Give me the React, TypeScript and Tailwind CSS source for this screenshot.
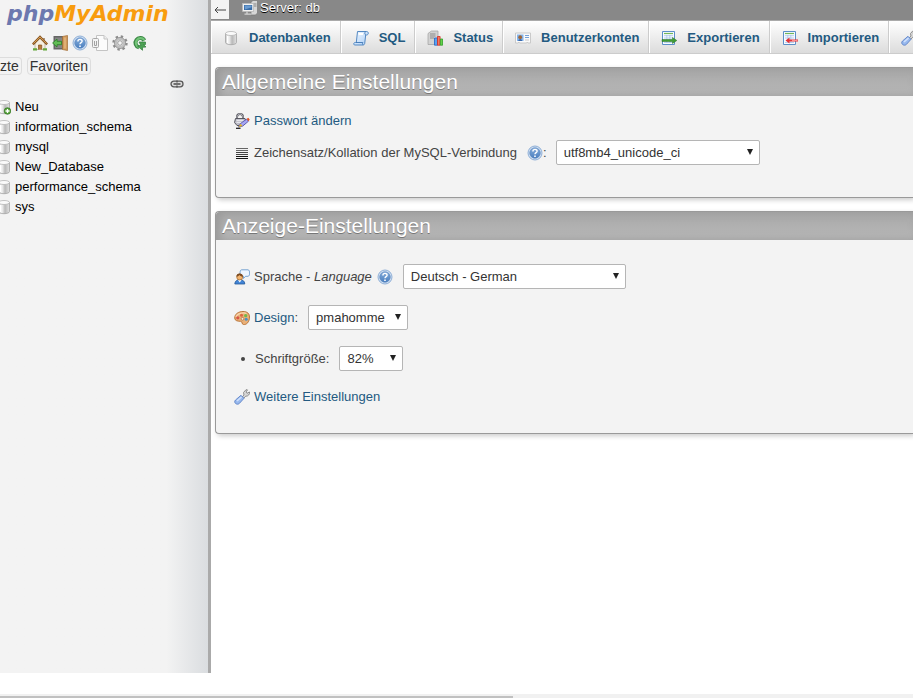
import { useState } from 'react';
import type { ReactNode } from 'react';

type IconProps = { children: ReactNode; className?: string; viewBox?: string };

function Icon({ children, className = 'size-4', viewBox = '0 0 16 16' }: IconProps) {
  return (
    <svg viewBox={viewBox} className={`block shrink-0 ${className}`} fill="none" aria-hidden="true">
      {children}
    </svg>
  );
}

function Cylinder() {
  return (
    <>
      <path d="M2.500 3.500v9c0 1.300 2.500 2.200 5.500 2.200s5.500-.9 5.500-2.200v-9z" fill="url(#metal)" stroke="#a3a3a3" strokeWidth=".8" />
      <ellipse cx="8" cy="3.500" rx="5.500" ry="2" fill="#fafafa" stroke="#b5b5b5" strokeWidth=".8" />
      <path d="M4.500 6v7" stroke="#fff" strokeWidth="1" />
    </>
  );
}

function Defs() {
  return (
    <svg className="absolute size-0" aria-hidden="true">
      <defs>
        <linearGradient id="metal" x1="0" x2="1" y1="0" y2="0">
          <stop offset="0" stopColor="#cfcfcf" />
          <stop offset=".3" stopColor="#f4f4f4" />
          <stop offset=".6" stopColor="#b9b9b9" />
          <stop offset="1" stopColor="#e2e2e2" />
        </linearGradient>
        <linearGradient id="ball" x1="0" x2="0" y1="0" y2="1">
          <stop offset="0" stopColor="#86addb" />
          <stop offset="1" stopColor="#4a7fbf" />
        </linearGradient>
        <linearGradient id="paper" x1="0" x2="1" y1="0" y2="1">
          <stop offset="0" stopColor="#f3f9ff" />
          <stop offset="1" stopColor="#a9cdf6" />
        </linearGradient>
      </defs>
    </svg>
  );
}

const DatabaseIcon = () => <Icon><Cylinder /></Icon>;

const HomeIcon = () => (
  <Icon>
    <path d="M3 8v6.500h10V8L8 3.500z" fill="#f6efe2" stroke="#aaa08e" strokeWidth=".7" />
    <path d="M.8 9.300 8 2l7.200 7.300" stroke="#8a5722" strokeWidth="2.400" />
    <path d="M1.500 8.500 8 2l6.500 6.500" stroke="#d49b51" strokeWidth="1" />
    <path d="M6.500 14.500V10h3.200v4.500" fill="#b97936" stroke="#81501f" strokeWidth=".7" />
    <path d="M1 14.300h4M11 14.300h4" stroke="#65a83b" strokeWidth="2.200" />
    <path d="M12 3v2.500" stroke="#8d653d" strokeWidth="1.300" />
  </Icon>
);

const ExitIcon = () => (
  <Icon>
    <path d="M1.500 1H11v13.500H1.500z" fill="#666" />
    <path d="M3 2.500h7V13H3z" fill="#858585" />
    <path d="m10.500 1.500 5-1v15l-5-1z" fill="#d19a5c" stroke="#a06c35" strokeWidth=".7" />
    <path d="M13 2.500v11" stroke="#e3b67c" strokeWidth="1.600" />
    <path d="M.6 8 5 4v2.300h4.500v3.400H5V12z" fill="#62bd55" stroke="#2a7d25" strokeWidth=".8" />
  </Icon>
);

const HelpIcon = () => (
  <Icon>
    <circle cx="8" cy="8" r="7" fill="#d3e2f4" stroke="#86a8d2" strokeWidth=".9" />
    <circle cx="8" cy="8" r="5.300" fill="url(#ball)" stroke="#5a87be" strokeWidth=".6" />
    <path d="M5.900 6.400c0-2.700 4.300-2.600 4.200-.2C10 7.700 8 7.500 8 9.300" stroke="#fff" strokeWidth="1.400" />
    <path d="M7.200 10.500h1.600v1.400H7.200z" fill="#fff" />
  </Icon>
);

const DocsIcon = () => (
  <Icon>
    <path d="M4.500.5h7.500l3.500 3.500v11.500h-11z" fill="#fcfcfc" stroke="#c4c4c4" />
    <path d="M12 .5V4h3.500" fill="#eee" stroke="#c4c4c4" />
    <rect x=".5" y="3.500" width="6" height="9" rx="1" fill="#f3f3f3" stroke="#a8a8a8" />
    <path d="M2.500 6v4.500h2V6" stroke="#a2a2a2" />
  </Icon>
);

const GearIcon = () => (
  <Icon>
    <circle cx="8" cy="8" r="6.500" stroke="#8c8c8c" strokeWidth="2.400" strokeDasharray="2.350 2.750" />
    <circle cx="8" cy="8" r="4.200" fill="#eee" stroke="#c0c0c0" strokeWidth="2.600" />
    <circle cx="8" cy="8" r="5.600" stroke="#8f8f8f" strokeWidth=".8" />
    <circle cx="8" cy="8" r="2.300" fill="#f4f4f4" stroke="#8a8a8a" strokeWidth=".8" />
  </Icon>
);

const ReloadIcon = () => (
  <Icon>
    <path d="M12.300 5.500A4.700 4.700 0 1 0 7 12.300" stroke="#3a8744" strokeWidth="4" />
    <path d="M12.300 5A4.700 4.700 0 1 0 7 12.300" stroke="#72c377" strokeWidth="2.200" />
    <path d="M7 7h6.500v2.500h-2L14 12l-3.500.3v3L5.500 11l3.500-.5z" fill="#4da255" stroke="#2f7b3a" strokeWidth=".7" />
  </Icon>
);

const ServerIcon = () => (
  <Icon>
    <path d="m9 2 2-1.500h4.500V13l-2 2H9z" fill="#d6d6d6" stroke="#777" strokeWidth=".7" />
    <path d="M10.500 4h4M10.500 6h4" stroke="#858585" />
    <rect x=".6" y="3.500" width="11" height="8" fill="#f1f1f1" stroke="#bababa" strokeWidth=".8" />
    <path d="M2 5h8.200v5H2z" fill="#396ca6" />
    <path d="M2.600 5.500h7v1.800L3 9.500z" fill="#6a9bd0" />
    <path d="M5 11.500v2M2.500 14.200h7" stroke="#d2d2d2" strokeWidth="1.300" />
  </Icon>
);

const ScrollIcon = () => (
  <Icon>
    <path d="M4.500 1.500h9c2.500 0 2.300 3.500 0 3.500h-.8l-1 8.500c-.2 1.500-1.700 1.500-1.700 1.500H2c-2 0-1.600-2.500.3-2.500h1z" fill="url(#paper)" stroke="#5489c3" strokeWidth="1" />
    <path d="M12.800 1.600c-1.300.7-1.300 3 0 3.300M3 12.500h6.800c-.7 1 0 2 .4 2.400" stroke="#3e76b4" strokeWidth=".9" />
    <path d="M5.500 4h4.500" stroke="#fff" strokeWidth="2" />
  </Icon>
);

const StatusIcon = () => (
  <Icon>
    <path d="M1 3.500 4.500 1H11v11l-2 2.500H1z" fill="#d2d2d2" stroke="#a0a0a0" strokeWidth=".7" />
    <path d="M3 4h5.500M3 6h5.500M3 8h4" stroke="#8b8b8b" />
    <path d="M7.500 8h3v7.200h-3z" fill="#58a2f2" stroke="#2565c4" strokeWidth=".8" />
    <path d="M10.500 6.500h2.600v8.700h-2.600z" fill="#f77462" stroke="#d62e20" strokeWidth=".8" />
    <path d="M13.300 9h2.300v6.200h-2.300z" fill="#62d54b" stroke="#2c9b25" strokeWidth=".8" />
  </Icon>
);

const UserCardIcon = () => (
  <Icon>
    <path d="M.5 3h15v10H13l-.7-1-.8 1H4.700l-.8-1-.8 1H.5z" fill="#fafafa" stroke="#c5c5c5" strokeWidth=".9" />
    <path d="M2 4.500h6.500V11H2z" fill="#83b4ed" />
    <circle cx="5.200" cy="7.200" r="1.900" fill="#9e6537" />
    <path d="M3.200 11c.3-2.800 3.800-2.800 4 0z" fill="#3b69aa" />
    <path d="M10 5.500h4M10 7.500h4" stroke="#74a1d9" />
    <path d="M10 10h4" stroke="#c8c8c8" />
  </Icon>
);

function SheetIcon({ kind }: { kind: 'export' | 'import' }) {
  return (
    <Icon>
      <path d="M1.500 1.500h12v13h-12z" fill="#f7fbff" stroke="#5c8fc8" />
      <path d="M3 3.500h9" stroke="#72b85b" strokeWidth="1.200" />
      <path d="M3 5.700h9M3 8h9M3 12.500h9M5.800 5v8M8.800 5v8" stroke="#a9c5e8" strokeWidth=".8" />
      {kind === 'export' ? (
        <path d="M1 9.500h10.500V7.500l4.300 3-4.300 3v-2H1z" fill="#3f9d35" stroke="#256e20" strokeWidth=".5" />
      ) : (
        <>
          <path d="M3.500 10.500 7.500 7.500v2H16v2H7.500v2z" fill="#e33338" />
          <path d="M10 10.500h5.500" stroke="#ff9a9a" strokeWidth=".9" />
        </>
      )}
    </Icon>
  );
}

const WrenchIcon = () => (
  <Icon>
    <path d="M8 8.200 10 6 9.500 3.500 12 .7l1.500.2L12 3l1 1.300L15.500 3c.7 2-1.500 4.500-3.800 4.200L9.500 9.500z" fill="#d7d7d7" stroke="#858585" strokeWidth=".9" />
    <path d="M1.500 11 7 6.300l3 3L5.500 14.300c-2.400 2.500-6.500-.8-4-3.300z" fill="#98b9ee" stroke="#5d82c6" strokeWidth=".9" />
    <path d="m3 12 4.500-4" stroke="#d0e1fd" strokeWidth="1.600" />
  </Icon>
);

const PasswordIcon = () => (
  <Icon>
    <path d="M3 6V4c0-4 6-4 6 0v2" stroke="#55555d" strokeWidth="2" />
    <path d="M3 6V4c0-4 6-4 6 0v2" stroke="#e2e2e8" strokeWidth=".7" />
    <path d="M1.500 5.500h9.500l1 3-1.500 3-3 1H3L.5 9.500z" fill="#bcbcc6" stroke="#4c4c55" strokeWidth=".9" />
    <path d="M2.500 7.300h7M2.500 9.300h6.500" stroke="#f1f1f5" />
    <path d="m4.500 14 2-3.500 6-4.300 2 2-6 5z" fill="#a6a5f2" stroke="#4c4ba5" strokeWidth=".8" />
    <path d="m4.500 14 2-3.300 2 2.200z" fill="#e4b622" />
    <path d="m12.700 6 1.500-1.200 1.500 1.800-1.200 1.700z" fill="#e34b1d" />
    <path d="M2 15.300h4.500" stroke="#111" strokeWidth="1.200" />
  </Icon>
);

const LinesIcon = () => (
  <Icon>
    <path d="M2 3.500h12M2 5.500h12" stroke="#666" />
    <path d="M2 7.500h12M2 9.500h12" stroke="#444" />
    <path d="M2 11.500h12M2 13.500h12" stroke="#151515" />
  </Icon>
);

const LanguageIcon = () => (
  <Icon>
    <path d="M7.500.8H14c2.200 0 2.200 6.500 0 6.500h-2.500L9.500 9.500V7.300h-2c-2 0-2-6.500 0-6.500z" fill="#eef6ff" stroke="#6b9bcc" strokeWidth=".9" />
    <path d="M.8 15c0-6 10-6 10 0z" fill="#4184d6" stroke="#265c9b" strokeWidth=".8" />
    <path d="m4 11 1.800 2.500L7.500 11z" fill="#fff" />
    <circle cx="5.700" cy="8" r="3" fill="#f2b46f" stroke="#a56728" strokeWidth=".7" />
    <path d="M2.500 7.800c-.5-4.500 6.700-4.300 6.400 0-2-.2-3-1.200-3.500-1.700-.8 1-1.900 1.600-2.900 1.700z" fill="#7b4a20" />
  </Icon>
);

const PaletteIcon = () => (
  <Icon>
    <path d="M.7 8C.7 4 4.500 1.500 9 1.500s6.500 2.300 6.500 5.500c0 5-3 8-6 7.500-2.300-.3-.5-3-3-3.200C4 11.200.7 11 .7 8z" fill="#e9b078" stroke="#b36c2e" strokeWidth=".9" />
    <path d="M2 7c1-3.500 7-5 10.500-3.500" stroke="#f8d5ad" strokeWidth="1.300" />
    <circle cx="3.800" cy="7.800" r="1.600" fill="#d95545" />
    <circle cx="7.500" cy="5.300" r="1.500" fill="#de6542" />
    <circle cx="11.700" cy="5.700" r="1.600" fill="#73b84a" />
    <circle cx="12.200" cy="9.200" r="1.500" fill="#4a91c7" />
    <circle cx="8.500" cy="8.800" r="1.400" fill="#f6ebdf" stroke="#ac6832" strokeWidth=".7" />
  </Icon>
);

const LinkIcon = () => (
  <Icon className="h-2 w-3.5" viewBox="0 0 14 8">
    <rect x="1" y="1.200" width="12" height="5.600" rx="2.800" fill="#ddd" stroke="#555" strokeWidth="1.300" />
    <path d="M7 .5v2M7 5.500v2" stroke="#555" strokeWidth="1.500" />
    <path d="M3.500 4h7" stroke="#555" strokeWidth="1.600" />
  </Icon>
);

const databases = ['Neu', 'information_schema', 'mysql', 'New_Database', 'performance_schema', 'sys'];

const shortcuts = [
  { label: 'Startseite', icon: <HomeIcon /> },
  { label: 'Abmelden', icon: <ExitIcon /> },
  { label: 'phpMyAdmin-Dokumentation', icon: <HelpIcon /> },
  { label: 'Dokumentation', icon: <DocsIcon /> },
  { label: 'Navigationseinstellungen', icon: <GearIcon /> },
  { label: 'Navigationspanel neu laden', icon: <ReloadIcon /> },
];

const tabs = [
  { label: 'Datenbanken', icon: <DatabaseIcon /> },
  { label: 'SQL', icon: <ScrollIcon /> },
  { label: 'Status', icon: <StatusIcon /> },
  { label: 'Benutzerkonten', icon: <UserCardIcon /> },
  { label: 'Exportieren', icon: <SheetIcon kind="export" /> },
  { label: 'Importieren', icon: <SheetIcon kind="import" /> },
  { label: '', icon: <WrenchIcon /> },
];

function Sidebar() {
  return (
    <aside className="w-52 shrink-0 overflow-hidden bg-linear-to-r from-[#f3f3f3] from-80% to-[#dadde0] text-black">
      <a href="#" className="ml-[7px] flex h-[27px] w-fit items-center font-['DejaVu_Sans',sans-serif] text-[22px] leading-[27px] font-bold italic">
        <span className="text-[#6c78af]">php</span>
        <span className="text-[#f89c0e]">MyAdmin</span>
      </a>
      <nav className="mt-2 ml-8 flex gap-1">
        {shortcuts.map((s) => (
          <a key={s.label} href="#" aria-label={s.label}>{s.icon}</a>
        ))}
      </nav>
      <div className="mt-[6px] flex gap-[5px] text-[14px] leading-4 text-[#333]">
        <button className="rounded-r-sm border border-l-0 border-[#ddd] pr-[2px]">zte</button>
        <button className="rounded-sm border border-[#ddd] px-[2px]">Favoriten</button>
      </div>
      <button aria-label="Verknüpfung mit dem Hauptpanel" className="mt-[5px] ml-[170px] block">
        <LinkIcon />
      </button>
      <ul className="mt-[9px]">
        {databases.map((name) => (
          <li key={name}>
            <a href="#" className="flex h-5 items-center gap-1">
              <Icon className="h-4 w-[11px]" viewBox="4 0 11 16">
                <Cylinder />
                {name === 'Neu' && (
                  <>
                    <circle cx="11.500" cy="12" r="3.300" fill="#58a33b" stroke="#2f7220" strokeWidth=".7" />
                    <path d="M9.500 12h4M11.500 10v4" stroke="#fff" strokeWidth="1.300" />
                  </>
                )}
              </Icon>
              {name}
            </a>
          </li>
        ))}
      </ul>
    </aside>
  );
}

type SelectProps = { id: string; value: string; className: string };

function Select({ id, value, className }: SelectProps) {
  const [current, setCurrent] = useState(value);
  return (
    <span className="relative block shrink-0">
      <select
        id={id}
        value={current}
        onChange={(e) => setCurrent(e.target.value)}
        className={`block h-[25px] appearance-none rounded-xs border border-[#b5b5b5] bg-white pl-[7px] text-[#333] ${className}`}
      >
        <option>{value}</option>
      </select>
      <svg viewBox="0 0 8 6" className="pointer-events-none absolute top-[9px] right-[6px] h-1.5 w-2" aria-hidden="true">
        <path d="M1 0h6L4 6z" fill="#222" />
      </svg>
    </span>
  );
}

function Panel({ title, children, className }: { title: string; children: ReactNode; className: string }) {
  return (
    <section className="rounded-l-sm border border-r-0 border-[#999] bg-[#f3f3f3] shadow-[2px_2px_5px_#ccc]">
      <h2 className="flex h-7 items-center rounded-tl-sm bg-linear-to-b from-[#a8a8a8] to-[#b8b8b8] pl-[6px] text-[21px] text-white shadow-[inset_4px_0_8px_#999] [text-shadow:0_1px_0_#777]">
        {title}
      </h2>
      <div className={`px-[18px] ${className}`}>{children}</div>
    </section>
  );
}

const link = 'text-[#235a81]';

export default function App() {
  return (
    <div className="flex h-screen flex-col overflow-hidden bg-white font-['Liberation_Sans',Arial,sans-serif] text-[13px] text-[#444]">
      <Defs />
      <div className="flex min-h-0 flex-1">
        <Sidebar />
        <div className="w-[3px] shrink-0 bg-[#aaa]" />
        <div className="min-w-0 flex-1 overflow-hidden">
          <header className="flex h-5 bg-[#888] text-white">
            <button aria-label="Panel ausblenden" className="flex h-[19px] w-[18px] items-center justify-center bg-[#f3f3f3]">
              <Icon className="h-2 w-3" viewBox="0 0 12 8">
                <path d="M12 4H1M4 1 1 4l3 3" stroke="#444" />
              </Icon>
            </button>
            <a href="#" className="ml-[13px] flex h-4 items-center gap-[2px] [text-shadow:0_1px_0_#000]">
              <ServerIcon />
              Server: db
            </a>
          </header>
          <nav className="flex h-[34px] border-t border-b border-t-[#aaa] border-b-[#ccc] bg-linear-to-b from-white to-[#dcdcdc]">
            {tabs.map((tab) => (
              <a
                key={tab.label}
                href="#"
                aria-label={tab.label || 'Einstellungen'}
                className={`flex shrink-0 items-center gap-[10px] border-r border-l border-r-[#ccc] border-l-white pt-px pr-[9px] pl-[11px] font-bold ${link}`}
              >
                {tab.icon}
                {tab.label}
              </a>
            ))}
          </nav>
          <main className="mt-[13px] ml-1 flex flex-col gap-[13px]">
            <Panel title="Allgemeine Einstellungen" className="pt-[17px] pb-8">
              <a href="#" className={`flex h-4 w-fit items-center gap-1 ${link}`}>
                <PasswordIcon />
                Passwort ändern
              </a>
              <div className="mt-[11px] flex items-center">
                <label htmlFor="collation" className="flex items-center gap-1">
                  <LinesIcon />
                  Zeichensatz/Kollation der MySQL-Verbindung
                </label>
                <a href="#" aria-label="Hilfe" className="ml-[10px]"><HelpIcon /></a>
                <span className="mr-[9px]">:</span>
                <Select id="collation" value="utf8mb4_unicode_ci" className="w-[204px]" />
              </div>
            </Panel>
            <Panel title="Anzeige-Einstellungen" className="pt-6 pb-7">
              <div className="flex items-center">
                <label htmlFor="language" className="flex items-center gap-1">
                  <LanguageIcon />
                  <span>Sprache - <em>Language</em></span>
                </label>
                <a href="#" aria-label="Hilfe" className="mr-[10px] ml-[5px]"><HelpIcon /></a>
                <Select id="language" value="Deutsch - German" className="w-[223px]" />
              </div>
              <div className="mt-4 flex items-center gap-[10px]">
                <label htmlFor="theme" className="flex items-center gap-1">
                  <PaletteIcon />
                  <span><span className={link}>Design</span>:</span>
                </label>
                <Select id="theme" value="pmahomme" className="w-[100px]" />
              </div>
              <ul className="mt-4">
                <li className="flex items-center gap-[10px] pl-[7px]">
                  <span className="size-1 rounded-full bg-[#444]" />
                  <label htmlFor="fontsize">Schriftgröße:</label>
                  <Select id="fontsize" value="82%" className="w-16" />
                </li>
              </ul>
              <a href="#" className={`mt-[18px] flex h-4 w-fit items-center gap-1 ${link}`}>
                <WrenchIcon />
                Weitere Einstellungen
              </a>
            </Panel>
          </main>
        </div>
      </div>
      <footer className="mt-[21px] h-1 shrink-0 bg-[#f1f1f1] pt-[2px]">
        <div className="h-[2px] w-[56.2%] bg-[#c1c1c1]" />
      </footer>
    </div>
  );
}
